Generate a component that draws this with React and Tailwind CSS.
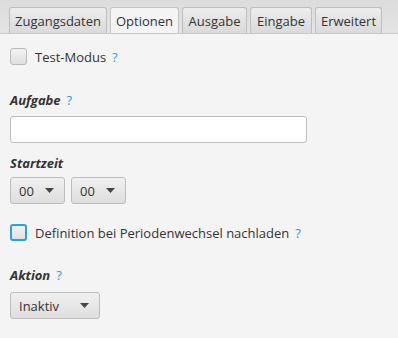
import React from 'react'

const font = { fontFamily: '"Open Sans", "Noto Sans", sans-serif' }

const Help = () => <span className="ml-[6px] font-normal not-italic text-[#2f9bd6]">?</span>

const Tab = ({ label, active, width }) => (
  <div
    className={
      'h-[26px] flex items-center justify-center rounded-t-[3px] border border-b-0 text-[13px] text-[#333] ' +
      width +
      (active
        ? ' bg-[#f4f4f4] border-[#c4c4c4]'
        : ' bg-gradient-to-b from-[#ededed] to-[#dadada] border-[#bdbdbd]')
    }
  >
    {label}
  </div>
)

const Check = ({ focused }) => (
  <div
    className={
      'w-[17px] h-[17px] shrink-0 rounded-[3px] bg-gradient-to-b from-[#f2f2f2] to-[#e0e0e0] ' +
      (focused ? 'border-2 border-[#2aa3dc]' : 'border border-[#b9b9b9]')
    }
  />
)

const Select = ({ value, width }) => (
  <div
    className={'h-[27px] flex items-center justify-between pl-[8px] pr-[10px] rounded-[3px] border border-[#bcbcbc] bg-gradient-to-b from-[#f0f0f0] to-[#dedede] text-[13px] text-[#333] ' + width}
  >
    <span>{value}</span>
    <svg width="9" height="5" viewBox="0 0 9 5"><path d="M0 0h9L4.5 5z" fill="#444" /></svg>
  </div>
)

export default function App() {
  return (
    <div className="w-[398px] h-[338px] bg-[#f4f4f4] text-[#333] text-[13px] leading-[18px] overflow-hidden" style={font}>
      <div className="h-[34px] bg-gradient-to-b from-[#dcdcdc] to-[#e4e4e4] border-b border-[#c8c8c8] flex items-end gap-[3px] pl-[9px]">
        <Tab label="Zugangsdaten" width="w-[98px]" />
        <Tab label="Optionen" width="w-[69px]" active />
        <Tab label="Ausgabe" width="w-[65px]" />
        <Tab label="Eingabe" width="w-[62px]" />
        <Tab label="Erweitert" width="w-[67px]" />
      </div>
      <div className="px-[10px]">
        <div className="mt-[14px] h-[17px] flex items-center">
          <Check />
          <span className="ml-[8px]">Test-Modus</span>
          <Help />
        </div>
        <div className="mt-[26px] font-bold italic">
          Aufgabe<Help />
        </div>
        <div className="mt-[7px] w-[297px] h-[27px] rounded-[3px] border border-[#bdbdbd] bg-white" />
        <div className="mt-[11px] font-bold italic">Startzeit</div>
        <div className="mt-[5px] flex gap-[6px]">
          <Select value="00" width="w-[55px]" />
          <Select value="00" width="w-[55px]" />
        </div>
        <div className="mt-[20px] h-[17px] flex items-center">
          <Check focused />
          <span className="ml-[8px]">Definition bei Periodenwechsel nachladen</span>
          <Help />
        </div>
        <div className="mt-[25px] font-bold italic">
          Aktion<Help />
        </div>
        <div className="mt-[8px]">
          <Select value="Inaktiv" width="w-[90px]" />
        </div>
      </div>
    </div>
  )
}
